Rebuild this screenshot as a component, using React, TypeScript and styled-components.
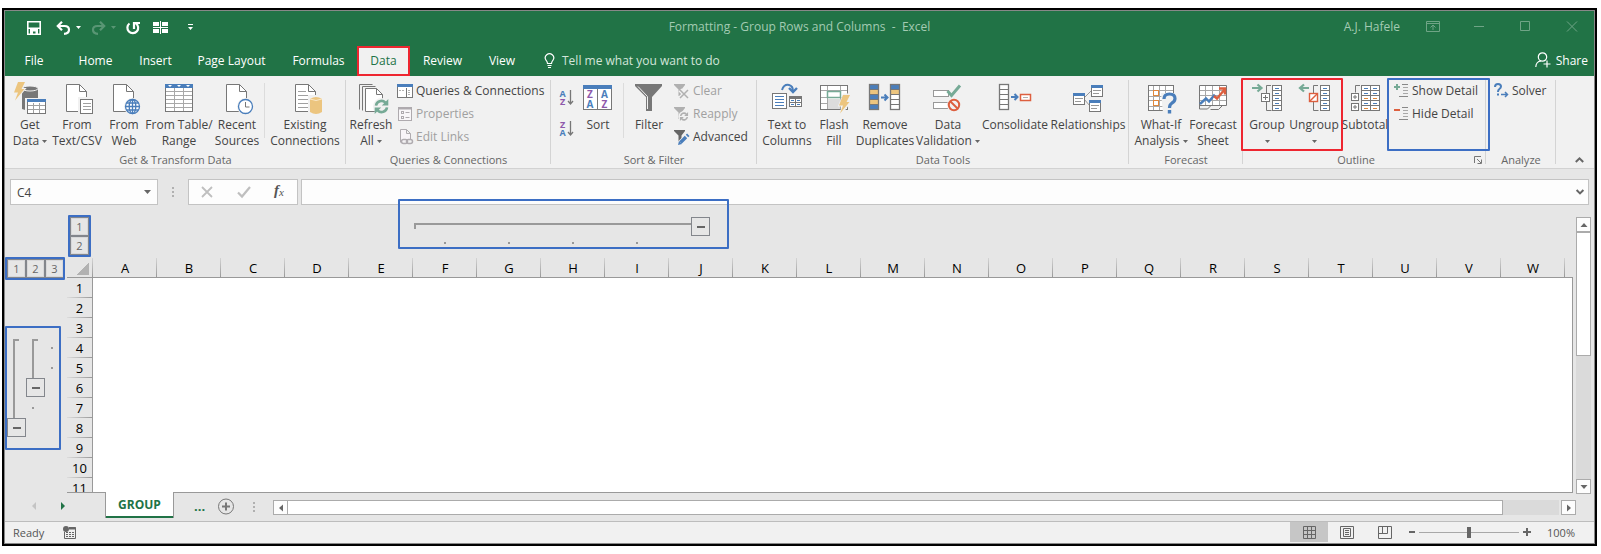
import React from "react";
import styled, { createGlobalStyle, css } from "styled-components";

const GREEN = "#217346";
const GRAY = "#777777";
const BLUE = "#4a7ebb";
const TEAL = "#76aa96";
const SAND = "#ecc57f";
const RUST = "#dd5f3f";
const MARK_RED = "#ee2630";
const MARK_BLUE = "#3c6ec4";

const Global = createGlobalStyle`
  *, *::before, *::after { box-sizing: border-box; }
  body { margin: 0; background: #fff; overflow: hidden; font-family: "Open Sans", "Noto Sans", sans-serif; font-size: 12px; color: #444; }
  button { border: 0; padding: 0; margin: 0; background: none; font: inherit; color: inherit; cursor: default; }
  input { font: inherit; color: inherit; }
  svg { display: block; overflow: visible; }
`;

const Window = styled.div`
  display: flex;
  flex-direction: column;
  height: calc(100vh - 16px);
  margin: 8px 4px 8px 2px;
  border: 2px solid #000;
  overflow: hidden;
`;

const Frame = styled.div`
  flex: 1;
  min-height: 0;
  display: flex;
  flex-direction: column;
  border: 1px solid #888;
  background: #e6e6e6;
`;

/* ---------- title bar ---------- */

const TitleBar = styled.header`
  display: grid;
  grid-template-columns: 1fr auto 1fr;
  align-items: center;
  height: 35px;
  padding-bottom: 4px;
  background: ${GREEN};
  color: #a3cbb3;
  white-space: pre;
`;

const QuickAccess = styled.div`
  display: flex;
  align-items: center;
  padding-top: 2px;
  padding-left: 22px;
  color: #fff;
`;

const QuickButton = styled.button<{ $gap: number; $dim?: boolean }>`
  margin-right: ${(p) => p.$gap}px;
  opacity: ${(p) => (p.$dim ? 0.25 : 1)};
`;

const WindowTitle = styled.h1`
  margin: 0;
  font-size: 12px;
  font-weight: 400;
`;

const WindowTools = styled.div`
  display: flex;
  justify-content: flex-end;
  align-items: center;
  padding-right: 16px;
`;

const WindowButton = styled.button`
  margin-left: 32px;
  color: #6fa486;
`;

const UserName = styled.span`
  margin-right: -6px;
`;

/* ---------- ribbon tabs ---------- */

const TabBar = styled.nav`
  display: flex;
  align-items: stretch;
  height: 30px;
  background: ${GREEN};
  color: #fff;
`;

const Tab = styled.button<{ $w: number; $active?: boolean }>`
  width: ${(p) => p.$w}px;
  padding-bottom: 2px;
  white-space: nowrap;
  ${(p) =>
    p.$active &&
    css`
      background: #f1f1f1;
      color: ${GREEN};
      border: 2px solid ${MARK_RED};
    `}
`;

const TellMe = styled.button`
  display: flex;
  align-items: center;
  gap: 7px;
  margin-left: 15px;
  padding-bottom: 2px;
  color: #d3e5da;
`;

const Share = styled.button`
  display: flex;
  align-items: center;
  gap: 5px;
  margin-left: auto;
  padding: 0 6px 2px 0;
`;

/* ---------- ribbon ---------- */

const Ribbon = styled.div`
  display: flex;
  height: 93px;
  flex: none;
  background: #f1f1f1;
  border-bottom: 1px solid #d2d2d2;
`;

const GroupBox = styled.section<{ $w: number }>`
  position: relative;
  display: flex;
  flex-direction: column;
  flex: none;
  width: ${(p) => p.$w}px;
  background: linear-gradient(#d4d4d4, #d4d4d4) right 4px / 1px 84px no-repeat;
`;

const GroupBody = styled.div<{ $pad: number }>`
  display: flex;
  align-items: flex-start;
  height: 76px;
  padding-left: ${(p) => p.$pad}px;
`;

const Caption = styled.h2<{ $right: number }>`
  margin: 0;
  padding-right: ${(p) => p.$right}px;
  height: 16px;
  line-height: 16px;
  font-size: 11px;
  font-weight: 400;
  text-align: center;
  color: #666;
`;

const Divider = styled.div<{ $side?: number }>`
  flex: none;
  width: 1px;
  height: 55px;
  margin: 7px ${(p) => p.$side ?? 1}px 0;
  background: #dcdcdc;
`;

const Big = styled.button<{ $w: number }>`
  flex: none;
  display: flex;
  flex-direction: column;
  align-items: center;
  width: ${(p) => p.$w}px;
  padding-top: 6px;
  white-space: nowrap;
  line-height: 16px;
`;

const BigLabel = styled.span`
  display: flex;
  flex-direction: column;
  align-items: center;
  margin-top: 3px;
`;

const LabelLine = styled.span`
  display: flex;
  align-items: center;
  gap: 3px;
  height: 16px;
`;

const SmallList = styled.div<{ $left: number }>`
  display: flex;
  flex-direction: column;
  padding-top: 3px;
  margin-left: ${(p) => p.$left}px;
`;

const Small = styled.button`
  display: flex;
  align-items: center;
  gap: 3px;
  height: 23px;
  white-space: nowrap;
  &:disabled {
    color: #a0a0a0;
  }
`;

const SortPair = styled.div`
  display: flex;
  flex-direction: column;
  gap: 14px;
  width: 26px;
  padding: 13px 0 0 8px;
`;

const Marked = styled.div<{ $color: string; $inset: string }>`
  position: relative;
  display: flex;
  &::after {
    content: "";
    position: absolute;
    inset: ${(p) => p.$inset};
    border: 2px solid ${(p) => p.$color};
    border-radius: 1px;
    pointer-events: none;
  }
`;

const Launcher = styled.button`
  position: absolute;
  right: 4px;
  bottom: 4px;
`;

const Collapse = styled.button`
  align-self: flex-end;
  margin: 0 10px 5px auto;
`;

/* ---------- formula bar ---------- */

const FormulaBar = styled.div`
  display: flex;
  flex: none;
  height: 37px;
  padding: 10px 5px 0;
`;

const Field = styled.div<{ $w?: number }>`
  display: flex;
  align-items: center;
  height: 26px;
  ${(p) => (p.$w ? `flex: none; width: ${p.$w}px;` : "flex: 1; min-width: 0;")}
  background: #fdfdfd;
  border: 1px solid #c3c3c3;
  & + & {
    margin-left: 3px;
  }
`;

const BareInput = styled.input`
  flex: 1;
  min-width: 0;
  border: 0;
  outline: 0;
  padding: 0 6px;
  background: transparent;
`;

const IconButton = styled.button<{ $right?: number; $left?: number }>`
  margin-right: ${(p) => p.$right ?? 0}px;
  margin-left: ${(p) => p.$left ?? 0}px;
`;

const Grip = styled.div<{ $side: number; $top: number }>`
  display: flex;
  flex-direction: column;
  gap: 2px;
  margin: ${(p) => p.$top}px ${(p) => p.$side}px 0;
  &::before,
  &::after,
  > i {
    content: "";
    width: 2px;
    height: 2px;
    background: #b0b0b0;
  }
`;

/* ---------- worksheet ---------- */

const Workspace = styled.main`
  flex: 1;
  min-height: 0;
  display: flex;
`;

const Gutter = styled.div`
  flex: none;
  width: 62px;
  padding-top: 53px;
`;

const LevelButton = styled.button`
  width: 19px;
  height: 19px;
  border: 1px solid #83868c;
  font-size: 11px;
  line-height: 16px;
  color: #666;
  box-shadow: inset 0 0 0 1px #d8d8da;
`;

const LevelRow = styled(Marked)`
  margin-left: 2px;
  width: 57px;
`;

const LevelColumn = styled(Marked)`
  flex-direction: column;
  width: 19px;
  height: 38px;
  margin: 11px 0 0 3px;
`;

const Lanes = styled(Marked)`
  margin: 61px 0 0 2px;
  width: 57px;
  height: 98px;
`;

const Lane = styled.div<{ $top?: number; $gap?: number }>`
  display: flex;
  flex-direction: column;
  width: 19px;
  padding-top: ${(p) => p.$top ?? 0}px;
  gap: ${(p) => p.$gap ?? 0}px;
`;

const VBracket = styled.div<{ $h: number }>`
  width: 6px;
  height: ${(p) => p.$h}px;
  margin-left: 6px;
  border: solid #999;
  border-width: 2px 0 0 2px;
`;

const HBracket = styled.div`
  width: 277px;
  height: 6px;
  margin-top: 6px;
  border: solid #999;
  border-width: 2px 0 0 2px;
`;

const Dot = styled.i<{ $left?: number }>`
  width: 2px;
  height: 2px;
  margin-left: ${(p) => p.$left ?? 0}px;
  background: #999;
`;

const FoldButton = styled.button`
  display: flex;
  align-items: center;
  justify-content: center;
  width: 19px;
  height: 19px;
  border: 1px solid #83868c;
  &::before {
    content: "";
    width: 8px;
    height: 2px;
    background: #666;
  }
`;

const SheetArea = styled.div`
  flex: 1;
  min-width: 0;
  display: flex;
  flex-direction: column;
`;

const TopOutline = styled.div`
  display: flex;
  flex: none;
  height: 52px;
`;

const ColumnOutline = styled(Marked)`
  flex-direction: column;
  width: 296px;
  height: 27px;
  margin: 11px 0 0 325px;
`;

const BracketRow = styled.div`
  display: flex;
`;

const DotRow = styled.div`
  display: flex;
  gap: 62px;
  padding: 6px 0 0 30px;
`;

const GridView = styled.div`
  flex: 1;
  min-height: 0;
  overflow: hidden;
  border-bottom: 1px solid #999;
`;

const Grid = styled.table`
  width: 100%;
  table-layout: fixed;
  border-collapse: separate;
  border-spacing: 0;
  color: #000;
  font-size: 13px;
  th,
  td {
    padding: 0;
    height: 20px;
    line-height: 18px;
    font-weight: 400;
  }
  thead th {
    border-bottom: 1px solid #999;
    background: linear-gradient(#d4d4d4, #999) right / 1px 100% no-repeat;
  }
  thead th:last-child {
    background: none;
  }
  tbody th {
    border-right: 1px solid #999;
    background: linear-gradient(to right, #dcdcdc, #999) bottom / 100% 1px no-repeat;
  }
  tbody td {
    background: #fff;
    border-right: 1px solid #999;
  }
`;

const SelectAll = styled.button`
  display: block;
  margin: 2px 0 0 10px;
  width: 12px;
  height: 12px;
  background: linear-gradient(to bottom right, transparent 50%, #b2b2b2 50%);
`;

const VScroll = styled.div`
  flex: none;
  display: flex;
  flex-direction: column;
  width: 15px;
  margin: 11px 3px -1px;
  background: #dadada;
`;

const ScrollButton = styled.button`
  flex: none;
  display: flex;
  align-items: center;
  justify-content: center;
  width: 15px;
  height: 15px;
  border: 1px solid #ababab;
  background: #fdfdfd;
`;

const VThumb = styled.div`
  height: 124px;
  border: 1px solid #ababab;
  background: #fff;
`;

const Spacer = styled.div`
  flex: 1;
`;

/* ---------- sheet tabs ---------- */

const SheetBar = styled.div`
  flex: none;
  display: flex;
  align-items: flex-start;
  height: 28px;
`;

const SheetTab = styled.button`
  width: 69px;
  height: 26px;
  margin: -1px 18px 0 38px;
  border: solid #999;
  border-width: 0 1px;
  background: #fff;
  box-shadow: inset 0 -2px 0 ${GREEN};
  color: ${GREEN};
  font-weight: 700;
  line-height: 26px;
`;

const MoreTabs = styled.button`
  margin: 4px 12px 0 2px;
  color: ${GREEN};
  font-size: 13px;
  font-weight: 700;
`;

const HScroll = styled.div`
  flex: 1;
  display: flex;
  height: 15px;
  margin: 7px 18px 0 0;
`;

const HTrack = styled.div`
  flex: 1;
  display: flex;
  margin-right: 2px;
  background: #dadada;
`;

const HThumb = styled.div`
  width: calc(100% - 56px);
  border: 1px solid #ababab;
  border-left: 0;
  background: #fff;
`;

/* ---------- status bar ---------- */

const StatusBar = styled.footer`
  flex: none;
  display: flex;
  align-items: center;
  height: 22px;
  padding: 0 19px 1px 8px;
  border-top: 1px solid #bdbdbd;
  background: #f1f1f1;
  font-size: 11px;
  color: #555;
`;

const ViewButton = styled.button<{ $active?: boolean }>`
  display: flex;
  align-items: center;
  justify-content: center;
  width: 38px;
  height: 20px;
  background: ${(p) => (p.$active ? "#c6c6c6" : "none")};
`;

const Zoom = styled.input`
  appearance: none;
  width: 100px;
  height: 11px;
  margin: 0 4px;
  background: transparent;
  &::-webkit-slider-runnable-track {
    height: 1px;
    background: #a8a8a8;
  }
  &::-webkit-slider-thumb {
    appearance: none;
    width: 4px;
    height: 11px;
    margin-top: -5px;
    background: #666;
  }
`;

const Percent = styled.button`
  width: 32px;
  margin-left: 12px;
  text-align: right;
`;

/* ---------- drawings ---------- */

type Kids = { children?: React.ReactNode };

const Art = ({ w = 32, h = 32, children }: { w?: number; h?: number } & Kids) => (
  <svg width={w} height={h} viewBox={`0 0 ${w} ${h}`} fill="none" stroke={GRAY} aria-hidden="true">
    {children}
  </svg>
);

const Caret = ({ color = "#666", w = 5 }: { color?: string; w?: number }) => (
  <svg width={w} height={w > 5 ? 4 : 3} viewBox="0 0 5 3" preserveAspectRatio="none" fill={color} aria-hidden="true">
    <path d="M0 0h5L2.5 3z" />
  </svg>
);

const Arrow = ({ turn = 0, color = "#666" }: { turn?: number; color?: string }) => (
  <svg width={8} height={8} viewBox="0 0 8 8" fill={color} aria-hidden="true">
    <path d="M0.500 6h7L4 2z" transform={`rotate(${turn} 4 4)`} />
  </svg>
);

const Doc = ({ x = 5.5, y = 2.5, w = 20, h = 27, f = 7 }) => (
  <>
    <path fill="#fff" d={`M${x} ${y}h${w - f}l${f} ${f}v${h - f}h${-w}z`} />
    <path d={`M${x + w - f} ${y}v${f}h${f}`} />
  </>
);

const Bolt = ({ x = 0, y = 0 }) => (
  <path
    transform={`translate(${x} ${y})`}
    fill={SAND}
    stroke="none"
    d="M4 0h7L7.500 7H10.500L1 18.500L4 10.500H0z"
  />
);

const RefreshMark = ({ x = 26.5, y = 24.5, s = 1, color = TEAL }) => (
  <g transform={`translate(${x} ${y}) scale(${s})`} stroke={color} strokeWidth="2.600">
    <path d="M-5.500 -0.800A5.500 5.500 0 0 1 3.800 -4" />
    <path d="M5.500 0.800A5.500 5.500 0 0 1 -3.800 4" />
    <path fill={color} stroke="none" d="M6.800 -7.500V-1H0.300zM-6.800 7.500V1H-0.300z" />
  </g>
);

const GetDataArt = () => (
  <Art>
    <path fill={GRAY} stroke="none" d="M8 7h16v20q-8 3-16 0z" />
    <ellipse cx="16" cy="6.500" rx="8" ry="2.500" fill={GRAY} stroke="#f1f1f1" />
    <path stroke="#f1f1f1" strokeWidth="2" fill="#f1f1f1" d="M4 0h7L7.500 7H10.500L1 18.500L4 10.500H0z" />
    <Bolt />
    <rect x="11" y="16" width="22" height="17" fill="#f1f1f1" stroke="none" />
    <rect x="13.500" y="18.500" width="18" height="13" fill="#fff" />
    <path stroke="#a0a0a0" d="M14 23.500h17M14 27.500h17M19.500 21v10M25.500 21v10" />
    <rect x="13" y="17" width="19" height="3" fill={BLUE} stroke="none" />
  </Art>
);

const TextCsvArt = () => (
  <Art>
    <Doc />
    <rect x="17" y="15" width="16" height="18" fill="#f1f1f1" stroke="none" />
    <rect x="19.500" y="17.500" width="12" height="14" fill="#fff" />
    <path stroke="#a0a0a0" d="M22 21.500h8M22 24.500h8M22 27.500h8" />
  </Art>
);

const WebArt = () => (
  <Art>
    <Doc />
    <circle cx="24.500" cy="24.500" r="8.500" fill="#f1f1f1" stroke="none" />
    <g stroke={BLUE} strokeWidth="1.300">
      <circle cx="24.500" cy="24.500" r="7" fill="#fff" />
      <ellipse cx="24.500" cy="24.500" rx="3.300" ry="7" />
      <path d="M24.500 17.500v14M17.500 24.500h14M18.500 21h12M18.500 28h12" />
    </g>
  </Art>
);

const TableArt = () => (
  <Art>
    <rect x="2.500" y="2.500" width="27" height="27" fill="#fff" />
    <path stroke="#a8a8a8" d="M3 9.500h26M3 13.500h26M3 17.500h26M3 21.500h26M3 25.500h26M11.500 6v23M20.500 6v23" />
    <rect x="2" y="2" width="28" height="4" fill={BLUE} stroke="none" />
    <path fill="#fff" stroke="none" d="M5 3h4L7 5zM14 3h4l-2 2zM23 3h4l-2 2z" />
  </Art>
);

const RecentArt = () => (
  <Art>
    <Doc />
    <circle cx="24.500" cy="24.500" r="8.500" fill="#f1f1f1" stroke="none" />
    <circle cx="24.500" cy="24.500" r="7" fill="#fff" stroke={BLUE} strokeWidth="1.300" />
    <path d="M24.500 20v5h4" />
  </Art>
);

const ExistingArt = () => (
  <Art>
    <Doc x={6.5} />
    <path stroke="#a0a0a0" d="M9 9.500h8M9 13.500h14M9 17.500h11M9 21.500h11M9 25.500h11" />
    <rect x="19" y="13" width="15" height="20" fill="#f1f1f1" stroke="none" />
    <path fill={SAND} stroke="none" d="M21 17q6-4 12 0v13q-6 4-12 0z" />
    <path stroke="#fbe9c8" d="M21 17q6 3 12 0" />
  </Art>
);

const RefreshArt = () => (
  <Art>
    <path d="M4.500 27.500v-25h13M7.500 28.500v-24h13" />
    <Doc x={10.5} y={6.5} w={17} h={23} f={6} />
    <circle cx="26.500" cy="24.500" r="8.500" fill="#f1f1f1" stroke="none" />
    <RefreshMark />
  </Art>
);

const QueriesArt = () => (
  <Art w={16} h={16}>
    <rect x="0.500" y="1.500" width="15" height="13" fill="#fff" />
    <rect x="0" y="1" width="16" height="3" fill={BLUE} stroke="none" />
    <path d="M9.500 5v9" />
    <path stroke="#b0b0b0" d="M2 7.500h6M11 7.500h3M11 9.500h3M11 11.500h3" strokeDasharray="2 1" />
  </Art>
);

const PropertiesArt = () => (
  <Art w={16} h={16}>
    <g stroke="#aeaaae">
      <rect x="1.500" y="1.500" width="13" height="13" fill="#f8f6f8" />
      <path d="M1 2.500h14" strokeWidth="2" />
      <rect x="4.500" y="5.500" width="2" height="2" />
      <rect x="4.500" y="10.500" width="2" height="2" />
      <path d="M8.500 6.500h4M8.500 11.500h4" />
    </g>
  </Art>
);

const LinksArt = () => (
  <Art w={16} h={16}>
    <g stroke="#b0acb0">
      <path fill="#f8f4f8" d="M3.500 13.500v-13h6l4 4v6M9.500 0.500v4h4" />
      <rect x="4.500" y="10.500" width="6" height="4" rx="2" strokeWidth="1.500" />
      <rect x="9.500" y="10.500" width="6" height="4" rx="2" strokeWidth="1.500" />
    </g>
  </Art>
);

const Letter = ({ x, y, c, s = 9 }: { x: number; y: number; c: "A" | "Z"; s?: number }) => (
  <text x={x} y={y} fontSize={s} fontWeight="700" stroke="none" fill={c === "A" ? BLUE : "#8e59ab"} textAnchor="middle">
    {c}
  </text>
);

const SortArt = ({ top, bottom }: { top: "A" | "Z"; bottom: "A" | "Z" }) => (
  <Art w={14} h={17}>
    <Letter x={3.5} y={8} c={top} />
    <Letter x={3.5} y={16} c={bottom} />
    <path strokeWidth="1.300" d="M11.500 1v13M9 12l2.500 3l2.500-3" />
  </Art>
);

const SortBoxArt = () => (
  <Art>
    <rect x="1.500" y="3.500" width="28" height="24" fill="#fff" />
    <path d="M15.500 6v21" />
    <rect x="1" y="3" width="29" height="4" fill={BLUE} stroke="none" />
    <Letter x={8} y={16} c="Z" s={10} />
    <Letter x={8} y={26} c="A" s={10} />
    <Letter x={22.5} y={16} c="A" s={10} />
    <Letter x={22.5} y={26} c="Z" s={10} />
  </Art>
);

const FilterArt = () => (
  <Art>
    <path fill={GRAY} stroke="none" d="M2 2h27v2L19 15v14h-6V15L2 4z" />
    <path stroke="#f1f1f1" d="M5 4.500l9.500 10V27" />
  </Art>
);

const SmallFunnel = ({ color }: { color: string }) => (
  <path fill={color} stroke="none" d="M0 1h11v1L7.500 6.500V13h-3V6.500L0 2z" />
);

const ClearArt = () => (
  <Art w={16} h={16}>
    <SmallFunnel color="#b0b0b0" />
    <path stroke="#f1f1f1" strokeWidth="4" d="M6 7l8 8M14 7l-8 8" />
    <path stroke="#b0b0b0" strokeWidth="1.500" d="M6 7l8 8M14 7l-8 8" />
  </Art>
);

const ReapplyArt = () => (
  <Art w={16} h={16}>
    <SmallFunnel color="#b0b0b0" />
    <circle cx="10" cy="10.500" r="5.500" fill="#f1f1f1" stroke="none" />
    <RefreshMark x={10} y={10.5} s={0.6} color="#b0b0b0" />
  </Art>
);

const AdvancedArt = () => (
  <Art w={16} h={16}>
    <SmallFunnel color="#666" />
    <path stroke="#f1f1f1" strokeWidth="5" d="M5 15l9-9" />
    <path stroke={BLUE} strokeWidth="3.400" d="M6.500 13.500L12 8M13 7l1.300-1.300" />
    <path fill={BLUE} stroke="none" d="M4 16l1-4l3 3z" />
  </Art>
);

const TextColumnsArt = () => (
  <Art>
    <rect x="1.500" y="11.500" width="14" height="15" fill="#fff" />
    <path stroke={BLUE} d="M4 14.500h9M4 17.500h9M4 20.500h9M4 23.500h9" />
    <rect x="18.500" y="14.500" width="12" height="10" fill="#fff" />
    <rect x="18" y="14" width="13" height="3" fill={GRAY} stroke="none" />
    <path d="M24.500 15v9M19 20.500h12" />
    <path stroke={BLUE} d="M20 18.500h3M26 18.500h3M20 22.500h3M26 22.500h3" />
    <path stroke={BLUE} strokeWidth="2" d="M11 8q2-6 7-5q4 1 4 6" />
    <path stroke={BLUE} strokeWidth="2.400" d="M18 6l4 4l4-4" />
  </Art>
);

const FlashFillArt = () => (
  <Art>
    <rect x="2.500" y="3.500" width="27" height="24" fill="#fff" />
    <path stroke="#a8a8a8" d="M3 8.500h26M3 15.500h26M3 21.500h26M9.500 4v23M22.500 4v23" />
    <rect x="10" y="17" width="12" height="10" fill="#dcdcdc" stroke="none" />
    <rect x="9.500" y="9.500" width="13" height="6" fill="#fff" stroke={TEAL} strokeWidth="1.500" />
    <path fill="#f1f1f1" stroke="#f1f1f1" strokeWidth="3" d="M26 13h6l-3 7h2.500L23 31l3-8h-4z" />
    <Bolt x={21} y={13} />
  </Art>
);

const BandColumn = ({ x, fills }: { x: number; fills: string[] }) => (
  <>
    {fills.map((f, i) => (
      <rect key={i} x={x + 0.5} y={2.5 + i * 5} width="9" height="5" fill={f} />
    ))}
    <rect x={x + 0.5} y="2.500" width="9" height="25" strokeWidth="1.300" />
  </>
);

const DuplicatesArt = () => (
  <Art>
    <BandColumn x={0} fills={[BLUE, SAND, BLUE, SAND, BLUE]} />
    <BandColumn x={21} fills={[BLUE, SAND, "#fff", "#fff", "#fff"]} />
    <path stroke={BLUE} strokeWidth="2" d="M12 15.500h6M15.500 12.500l3 3l-3 3" />
  </Art>
);

const ValidationArt = () => (
  <Art>
    <rect x="1.500" y="8.500" width="15" height="6" fill="#fff" stroke="#999" />
    <rect x="1.500" y="20.500" width="15" height="6" fill="#fff" stroke="#999" />
    <path stroke={TEAL} strokeWidth="3" d="M15.500 9l4 4.500L28 3.500" />
    <circle cx="22" cy="23" r="7" fill="#f1f1f1" stroke="none" />
    <circle cx="22" cy="23" r="5.200" stroke={RUST} strokeWidth="2" />
    <path stroke={RUST} strokeWidth="2" d="M18.500 19.500l7 7" />
  </Art>
);

const ConsolidateArt = () => (
  <Art>
    <BandColumn x={0} fills={["#fff", "#fff", "#fff", "#fff", "#fff"]} />
    <path stroke={BLUE} strokeWidth="2" d="M12 15h6M15.500 12l3 3l-3 3" />
    <rect x="21.500" y="12.500" width="10" height="6" fill="#fff" stroke={RUST} strokeWidth="1.500" />
    <path stroke="#b0b0b0" d="M24 15.500h5" />
  </Art>
);

const Card = ({ x, y }: { x: number; y: number }) => (
  <>
    <rect x={x + 0.5} y={y + 0.5} width="11" height="11" fill="#fff" />
    <rect x={x} y={y} width="12" height="3" fill={BLUE} stroke="none" />
    <path stroke="#999" d={`M${x + 2} ${y + 5.5}h8M${x + 2} ${y + 8.5}h6`} />
  </>
);

const RelationsArt = () => (
  <Art>
    <path stroke="#999" d="M12 16l8-8M12 17l6 7" />
    <Card x={1} y={11} />
    <Card x={19} y={3} />
    <Card x={17} y={18} />
  </Art>
);

const WhatIfArt = () => (
  <Art>
    <rect x="3.500" y="3.500" width="25" height="25" fill="#fff" />
    <path stroke="#a8a8a8" d="M4 8.500h24M4 14.500h24M4 18.500h24M4 24.500h24M8.500 4v24M14.500 4v24M20.500 4v24" />
    <rect x="8.500" y="8.500" width="5" height="5" fill="#fff" stroke="#e0873c" />
    <rect x="8.500" y="18.500" width="5" height="5" fill="#fff" stroke="#e0873c" />
    <path fill="#f1f1f1" stroke="none" d="M16 11h15v20h-13z" />
    <path stroke={BLUE} strokeWidth="3.200" d="M19 17q0-5 5.500-5t5.500 4.500q0 3-3 4.500q-2.500 1.500-2.500 5" />
    <path stroke={BLUE} strokeWidth="3.400" d="M24.500 28v3.500" />
  </Art>
);

const ForecastArt = () => (
  <Art>
    <path fill="#fff" d="M2.500 3.500h27v20h-27z" />
    <path stroke="#a8a8a8" d="M3 8.500h26M3 13.500h26M3 18.500h26M8.500 4v19M15.500 4v19M22.500 4v19" />
    <path d="M2.500 23v4h8l4-4M13.500 27.500h8l4-4" />
    <path stroke={BLUE} strokeWidth="2.400" d="M3 22l6-5.500l3 3l5-6l2 2" />
    <path stroke={RUST} strokeWidth="2.400" d="M17 14l3 2.500L28 7M22 6.500h6v6" />
  </Art>
);

const OutlineRows = ({ x = 21, two = false }) => (
  <>
    <rect x={x + 0.5} y="3.500" width="9" height="25" fill="#fff" />
    <path d={`M${x} 8.500h10M${x} 13.500h10M${x} 18.500h10M${x} 23.500h10`} />
    {[0, 5, 10, 15, 20].map((d) => (
      <path key={d} stroke={two && (d === 10 || d === 20) ? "#e0873c" : BLUE} d={`M${x + 3} ${6.5 + d}h4`} />
    ))}
  </>
);

const GroupArt = () => (
  <Art>
    <path stroke={TEAL} strokeWidth="2.200" d="M1 6h9M6.500 2.500l4 3.500l-4 3.500" />
    <path d="M20 3.500h-4.500v25h5" />
    <rect x="10.500" y="11.500" width="8" height="8" fill="#fff" />
    <path d="M14.500 13v5M12 15.500h5" />
    <OutlineRows />
  </Art>
);

const UngroupArt = () => (
  <Art>
    <path stroke={TEAL} strokeWidth="2.200" d="M11 6H2M6 2.500l-4 3.500l4 3.500" />
    <path d="M20 3.500h-4.500v25h5" />
    <rect x="11.500" y="11.500" width="8" height="8" fill="#fff" stroke={RUST} strokeWidth="1.400" />
    <path stroke={RUST} strokeWidth="1.400" d="M11.500 19.500l8-8" />
    <OutlineRows x={22} />
  </Art>
);

const SubtotalArt = () => (
  <Art>
    <path d="M11 3.500H6.500v7" />
    <rect x="2.500" y="11.500" width="7" height="7" fill="#fff" />
    <rect x="2.500" y="21.500" width="7" height="7" fill="#fff" />
    <path d="M6 13v4M4 15h4M6 23v4M4 25h4" />
    <OutlineRows x={12} two />
    <OutlineRows x={21} two />
  </Art>
);

const DetailArt = ({ plus }: { plus?: boolean }) => (
  <Art w={15} h={16}>
    {plus ? (
      <path stroke={TEAL} strokeWidth="2" d="M0 4h6M3 1v6" />
    ) : (
      <path stroke={RUST} strokeWidth="2" d="M0 4h6" />
    )}
    <path stroke="#888" d="M8 1.500h6M8 13.500h6M5 13.500h3" />
    <path stroke="#a8a8a8" d="M9 4.500h5M9 7.500h5M9 10.500h5" />
  </Art>
);

const SolverArt = () => (
  <Art w={15} h={16}>
    <path stroke={BLUE} strokeWidth="2" d="M1 4q0-3 3-3t3 2.600q0 1.400-1.600 2.400Q4 7 4 9M4 10.500v2" />
    <path stroke={BLUE} strokeWidth="1.500" d="M7 11.500h6M11 9l2.500 2.500L11 14" />
  </Art>
);

/* ---------- data ---------- */

type BigItem = { w: number; lines: string[]; menu?: boolean; art: React.ReactNode };

const BigButton = ({ w, lines, menu, art }: BigItem) => (
  <Big $w={w}>
    {art}
    <BigLabel>
      {lines.map((line, i) => (
        <LabelLine key={i}>
          {line}
          {menu && i === lines.length - 1 && <Caret />}
        </LabelLine>
      ))}
    </BigLabel>
  </Big>
);

const COLUMNS = "ABCDEFGHIJKLMNOPQRSTUVW".split("");
const ROWS = Array.from({ length: 11 }, (_, i) => i + 1);

const TABS = [
  { name: "File", w: 58 },
  { name: "Home", w: 65 },
  { name: "Insert", w: 55 },
  { name: "Page Layout", w: 97 },
  { name: "Formulas", w: 77 },
  { name: "Data", w: 53, active: true },
  { name: "Review", w: 65 },
  { name: "View", w: 54 },
];

type GroupProps = { w: number; pad?: number; captionRight?: number; title: string } & Kids;

const Group = ({ w, pad = 0, captionRight = 0, title, children }: GroupProps) => (
  <GroupBox $w={w}>
    <GroupBody $pad={pad}>{children}</GroupBody>
    <Caption $right={captionRight}>{title}</Caption>
  </GroupBox>
);

export default function App() {
  return (
    <>
      <Global />
      <Window>
        <Frame>
          <TitleBar>
            <QuickAccess>
              <QuickButton $gap={15} aria-label="Save">
                <svg width="14" height="14" fill="none" stroke="#fff" strokeWidth="1.600">
                  <path d="M0.800 0.800h12.400v12.400H0.800zM1 7.200h12" />
                  <path fill="#fff" stroke="none" d="M3 8h8v5.500H8.500v-3h-2.500v3H3z" />
                </svg>
              </QuickButton>
              <QuickButton $gap={5} aria-label="Undo">
                <svg width="15" height="14" fill="none" stroke="#fff" strokeWidth="2.200">
                  <path d="M2 5h6.500q4.500 0 4.500 3.800q0 3.700-5 4M6 0.800L1.800 5L6 9.200" />
                </svg>
              </QuickButton>
              <QuickButton $gap={10} aria-label="Undo history"><Caret color="#fff" /></QuickButton>
              <QuickButton $gap={5} $dim aria-label="Redo">
                <svg width="15" height="14" fill="none" stroke="#fff" strokeWidth="2.200">
                  <path d="M13 5H6.500Q2 5 2 8.800q0 3.700 5 4M9 0.800L13.200 5L9 9.200" />
                </svg>
              </QuickButton>
              <QuickButton $gap={10} $dim aria-label="Redo history"><Caret color="#fff" /></QuickButton>
              <QuickButton $gap={13} aria-label="Repeat">
                <svg width="14" height="14" fill="none" stroke="#fff" strokeWidth="2.200">
                  <path d="M3.500 2.500A5.400 5.400 0 1 0 9.800 2.300M8 8V2h6" />
                </svg>
              </QuickButton>
              <QuickButton $gap={19} aria-label="Freeze panes">
                <svg width="16" height="13" fill="#fff">
                  <path d="M0 1h6v4H0zM9 1h6v4H9zM0 8h6v4H0zM9 8h6v4H9zM7 0h1v13H7zM0 6h15v1H0z" />
                </svg>
              </QuickButton>
              <QuickButton $gap={0} aria-label="Customize toolbar">
                <svg width="5" height="7" fill="#fff">
                  <path d="M0 0h5v1H0zM0 3h5L2.500 6z" />
                </svg>
              </QuickButton>
            </QuickAccess>
            <WindowTitle>{"Formatting - Group Rows and Columns  -  Excel"}</WindowTitle>
            <WindowTools>
              <UserName>A.J. Hafele</UserName>
              <WindowButton aria-label="Ribbon display options">
                <svg width="14" height="11" fill="none" stroke="currentColor">
                  <path d="M0.500 0.500h13v10h-13zM1 2.500h12M7 9V4M4.500 6.500L7 4l2.500 2.500" />
                </svg>
              </WindowButton>
              <WindowButton aria-label="Minimize">
                <svg width="14" height="11" stroke="currentColor"><path d="M2 5.500h10" /></svg>
              </WindowButton>
              <WindowButton aria-label="Maximize">
                <svg width="14" height="11" fill="none" stroke="currentColor"><path d="M2.500 0.500h9v9h-9z" /></svg>
              </WindowButton>
              <WindowButton aria-label="Close">
                <svg width="14" height="11" stroke="currentColor"><path d="M3 0.500l10 10M13 0.500l-10 10" /></svg>
              </WindowButton>
            </WindowTools>
          </TitleBar>

          <TabBar>
            {TABS.map((t) => (
              <Tab key={t.name} $w={t.w} $active={t.active}>{t.name}</Tab>
            ))}
            <TellMe>
              <svg width="11" height="15" fill="none" stroke="#fff">
                <path strokeWidth="1.200" d="M3.500 10.500Q3.500 9 2 7.200A4.200 4.200 0 1 1 9 7.200Q7.500 9 7.500 10.500zM3.500 12.500h4M4 14.500h3" />
              </svg>
              Tell me what you want to do
            </TellMe>
            <Share>
              <svg width="16" height="16" fill="none" stroke="#fff" strokeWidth="1.200">
                <circle cx="7.500" cy="5" r="4.200" />
                <path d="M0.800 15Q1 9.500 6 9M12 8.500v7M8.500 12h7" />
              </svg>
              Share
            </Share>
          </TabBar>

          <Ribbon>
            <Group w={341} pad={2} title="Get &amp; Transform Data">
              <BigButton w={46} lines={["Get", "Data"]} menu art={<GetDataArt />} />
              <BigButton w={48} lines={["From", "Text/CSV"]} art={<TextCsvArt />} />
              <BigButton w={46} lines={["From", "Web"]} art={<WebArt />} />
              <BigButton w={64} lines={["From Table/", "Range"]} art={<TableArt />} />
              <BigButton w={52} lines={["Recent", "Sources"]} art={<RecentArt />} />
              <Divider />
              <BigButton w={78} lines={["Existing", "Connections"]} art={<ExistingArt />} />
            </Group>
            <Group w={205} pad={1} title="Queries &amp; Connections">
              <BigButton w={48} lines={["Refresh", "All"]} menu art={<RefreshArt />} />
              <SmallList $left={2}>
                <Small><QueriesArt />Queries &amp; Connections</Small>
                <Small disabled><PropertiesArt />Properties</Small>
                <Small disabled><LinksArt />Edit Links</Small>
              </SmallList>
            </Group>
            <Group w={206} title="Sort &amp; Filter">
              <SortPair>
                <IconButton aria-label="Sort A to Z"><SortArt top="A" bottom="Z" /></IconButton>
                <IconButton aria-label="Sort Z to A"><SortArt top="Z" bottom="A" /></IconButton>
              </SortPair>
              <BigButton w={42} lines={["Sort"]} art={<SortBoxArt />} />
              <Divider $side={4} />
              <BigButton w={42} lines={["Filter"]} art={<FilterArt />} />
              <SmallList $left={4}>
                <Small disabled><ClearArt />Clear</Small>
                <Small disabled><ReapplyArt />Reapply</Small>
                <Small><AdvancedArt />Advanced</Small>
              </SmallList>
            </Group>
            <Group w={372} pad={3} title="Data Tools">
              <BigButton w={54} lines={["Text to", "Columns"]} art={<TextColumnsArt />} />
              <BigButton w={40} lines={["Flash", "Fill"]} art={<FlashFillArt />} />
              <BigButton w={62} lines={["Remove", "Duplicates"]} art={<DuplicatesArt />} />
              <BigButton w={64} lines={["Data", "Validation"]} menu art={<ValidationArt />} />
              <BigButton w={70} lines={["Consolidate"]} art={<ConsolidateArt />} />
              <BigButton w={76} lines={["Relationships"]} art={<RelationsArt />} />
            </Group>
            <Group w={114} pad={6} title="Forecast">
              <BigButton w={52} lines={["What-If", "Analysis"]} menu art={<WhatIfArt />} />
              <BigButton w={52} lines={["Forecast", "Sheet"]} art={<ForecastArt />} />
            </Group>
            <Group w={243} captionRight={17} title="Outline">
              <Marked $color={MARK_RED} $inset="2px -6px -2px -2px">
                <BigButton w={48} lines={["Group", ""]} menu art={<GroupArt />} />
                <BigButton w={46} lines={["Ungroup", ""]} menu art={<UngroupArt />} />
              </Marked>
              <BigButton w={56} lines={["Subtotal"]} art={<SubtotalArt />} />
              <Marked $color={MARK_BLUE} $inset="2px -12px -26px -6px">
                <SmallList $left={1}>
                  <Small><DetailArt plus />Show Detail</Small>
                  <Small><DetailArt />Hide Detail</Small>
                </SmallList>
              </Marked>
              <Launcher aria-label="Outline settings">
                <svg width="8" height="8" fill="none" stroke="#777">
                  <path d="M0.500 7V0.500H7M3 3l4 4M7.500 3.500v4h-4" />
                </svg>
              </Launcher>
            </Group>
            <Group w={70} pad={8} title="Analyze">
              <SmallList $left={0}>
                <Small><SolverArt />Solver</Small>
              </SmallList>
            </Group>
            <Collapse aria-label="Collapse ribbon">
              <svg width="9" height="6" fill="none" stroke="#666" strokeWidth="2"><path d="M0.800 5l3.700-3.700L8.200 5" /></svg>
            </Collapse>
          </Ribbon>

          <FormulaBar>
            <Field $w={148}>
              <BareInput aria-label="Name box" defaultValue="C4" />
              <IconButton $right={6} aria-label="Names"><Caret w={7} /></IconButton>
            </Field>
            <Grip $side={14} $top={8}><i /></Grip>
            <Field $w={110}>
              <IconButton $left={12} aria-label="Cancel">
                <svg width="12" height="12" stroke="#bfbfbf" strokeWidth="1.800"><path d="M1 1l10 10M11 1L1 11" /></svg>
              </IconButton>
              <IconButton $left={24} aria-label="Enter">
                <svg width="14" height="12" fill="none" stroke="#bfbfbf" strokeWidth="2.200"><path d="M1 6.500l4 4L13 1" /></svg>
              </IconButton>
              <IconButton $left={22} aria-label="Insert function">
                <svg width="14" height="18" fill="#555" fontFamily="Liberation Serif, serif" fontStyle="italic">
                  <text x="1" y="12" fontSize="15" fontWeight="700">f</text>
                  <text x="6" y="13" fontSize="11">x</text>
                </svg>
              </IconButton>
            </Field>
            <Field>
              <BareInput aria-label="Formula" />
              <IconButton $right={4} aria-label="Expand formula bar">
                <svg width="8" height="6" fill="none" stroke="#666" strokeWidth="2"><path d="M0.600 1L4 4.400L7.400 1" /></svg>
              </IconButton>
            </Field>
          </FormulaBar>

          <Workspace>
            <Gutter>
              <LevelRow $color={MARK_BLUE} $inset="-2px -1px -2px -2px">
                <LevelButton>1</LevelButton>
                <LevelButton>2</LevelButton>
                <LevelButton>3</LevelButton>
              </LevelRow>
              <Lanes $color={MARK_BLUE} $inset="-13px 3px -13px -2px">
                <Lane>
                  <VBracket $h={79} />
                  <FoldButton aria-label="Collapse rows 4 to 7" />
                </Lane>
                <Lane>
                  <VBracket $h={39} />
                  <FoldButton aria-label="Collapse rows 4 to 5" />
                  <Lane $top={10}><Dot $left={6} /></Lane>
                </Lane>
                <Lane $top={8} $gap={18}>
                  <Dot $left={6} />
                  <Dot $left={6} />
                </Lane>
              </Lanes>
            </Gutter>
            <SheetArea>
              <TopOutline>
                <LevelColumn $color={MARK_BLUE} $inset="-2px">
                  <LevelButton>1</LevelButton>
                  <LevelButton>2</LevelButton>
                </LevelColumn>
                <ColumnOutline $color={MARK_BLUE} $inset="-18px -19px -5px -16px">
                  <BracketRow>
                    <HBracket />
                    <FoldButton aria-label="Collapse columns F to I" />
                  </BracketRow>
                  <DotRow><Dot /><Dot /><Dot /><Dot /></DotRow>
                </ColumnOutline>
              </TopOutline>
              <GridView>
                <Grid>
                  <colgroup>
                    <col width={26} />
                    {COLUMNS.map((c) => <col key={c} width={64} />)}
                    <col />
                  </colgroup>
                  <thead>
                    <tr>
                      <th><SelectAll aria-label="Select all" /></th>
                      {COLUMNS.map((c) => <th key={c} scope="col">{c}</th>)}
                      <th />
                    </tr>
                  </thead>
                  <tbody>
                    {ROWS.map((r) => (
                      <tr key={r}>
                        <th scope="row">{r}</th>
                        <td colSpan={24} />
                      </tr>
                    ))}
                  </tbody>
                </Grid>
              </GridView>
            </SheetArea>
            <VScroll>
              <ScrollButton aria-label="Scroll up"><Arrow /></ScrollButton>
              <VThumb />
              <Spacer />
              <ScrollButton aria-label="Scroll down"><Arrow turn={180} /></ScrollButton>
            </VScroll>
          </Workspace>

          <SheetBar>
            <IconButton $left={26} $right={20} aria-label="Previous sheet">
              <svg width="6" height="26" fill="#c4c4c4"><path d="M5 9v8L1 13z" /></svg>
            </IconButton>
            <IconButton $left={4} aria-label="Next sheet">
              <svg width="6" height="26" fill={GREEN}><path d="M0 9v8l4-4z" /></svg>
            </IconButton>
            <SheetTab>GROUP</SheetTab>
            <MoreTabs>...</MoreTabs>
            <IconButton aria-label="New sheet">
              <svg width="18" height="27" fill="none" stroke="#777">
                <circle cx="9" cy="13.500" r="7.500" />
                <path strokeWidth="2" d="M5 13.500h8M9 9.500v8" />
              </svg>
            </IconButton>
            <Grip $side={18} $top={9}><i /></Grip>
            <HScroll>
              <ScrollButton aria-label="Scroll left"><Arrow turn={-90} /></ScrollButton>
              <HTrack><HThumb /></HTrack>
              <ScrollButton aria-label="Scroll right"><Arrow turn={90} /></ScrollButton>
            </HScroll>
          </SheetBar>

          <StatusBar>
            <span>Ready</span>
            <IconButton $left={19} aria-label="Record macro">
              <svg width="14" height="13" fill="none" stroke="#666">
                <path d="M1.500 6v6.500h11V1.500H6" />
                <path strokeWidth="2" d="M6 2.500h7" />
                <path strokeDasharray="2 1" d="M3 6.500h9M3 8.500h9M3 10.500h9" />
                <circle cx="3" cy="3" r="3" fill="#666" stroke="none" />
              </svg>
            </IconButton>
            <Spacer />
            <ViewButton $active aria-label="Normal view">
              <svg width="13" height="13" fill="none" stroke="#666"><path d="M0.500 0.500h12v12h-12zM4.500 0v13M8.500 0v13M0 4.500h13M0 8.500h13" /></svg>
            </ViewButton>
            <ViewButton aria-label="Page layout view">
              <svg width="14" height="13" fill="none" stroke="#666"><path d="M0.500 0.500h13v12h-13zM3.500 2.500h7v8h-7zM5 4.500h4M5 6.500h4M5 8.500h4" /></svg>
            </ViewButton>
            <ViewButton aria-label="Page break view">
              <svg width="14" height="13" fill="none" stroke="#666"><path d="M0.500 0.500h13v12h-13zM4.500 0v7.500H0M9.500 0v7.500H4" /></svg>
            </ViewButton>
            <IconButton $left={5} aria-label="Zoom out">
              <svg width="6" height="10" stroke="#666" strokeWidth="2"><path d="M0 5h6" /></svg>
            </IconButton>
            <Zoom type="range" min={0} max={100} defaultValue={50} aria-label="Zoom" />
            <IconButton aria-label="Zoom in">
              <svg width="8" height="10" stroke="#666" strokeWidth="2"><path d="M0 5h8M4 1v8" /></svg>
            </IconButton>
            <Percent>100%</Percent>
          </StatusBar>
        </Frame>
      </Window>
    </>
  );
}
